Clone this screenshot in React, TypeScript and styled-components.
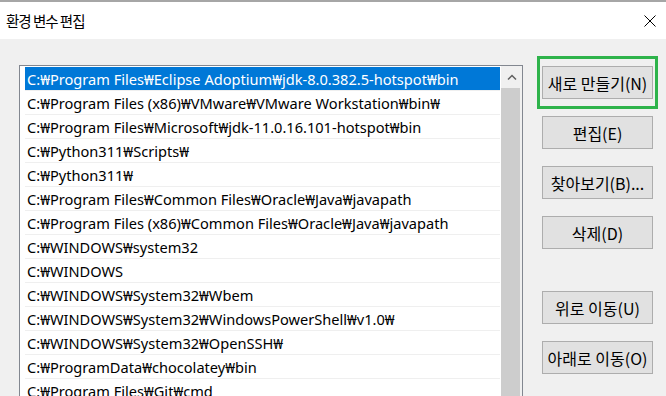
import React from "react";
import styled, { createGlobalStyle } from "styled-components";

const Global = createGlobalStyle`
  html, body { margin: 0; padding: 0; background: #f0f0f0; }
  body { font-family: "Noto Sans CJK KR", "Noto Sans", sans-serif; }
`;

const Window = styled.div`
  width: 666px;
  height: 396px;
  overflow: hidden;
  background: #f0f0f0;
  display: flex;
  flex-direction: column;
`;

const TitleBar = styled.div`
  flex-shrink: 0;
  height: 37px;
  border-top: 2px solid #a6a6a6;
  background: #ffffff;
  display: flex;
  align-items: center;
  justify-content: space-between;
  padding: 0 10px 0 6px;
`;

const Title = styled.span`
  font-size: 14.5px;
  letter-spacing: -1px;
  color: #000;
`;

const CloseIcon = styled.svg`
  display: block;
  width: 12px;
  height: 12px;
`;

const Body = styled.div`
  display: flex;
  align-items: flex-start;
  gap: 19px;
  padding: 26px 0 0 19px;
`;

const ListBox = styled.div`
  flex-shrink: 0;
  width: 504px;
  height: 420px;
  box-sizing: border-box;
  border: 1px solid #828790;
  background: #ffffff;
  display: flex;
`;

const Rows = styled.div`
  flex: 1;
  padding: 1px 0 0 5px;
  display: flex;
  flex-direction: column;
  min-width: 0;
`;

const Row = styled.div<{ $selected?: boolean }>`
  flex-shrink: 0;
  height: 23px;
  border-bottom: 1px solid #efefef;
  padding-left: 2px;
  display: flex;
  align-items: center;
  font-family: "Noto Sans", "Noto Sans CJK KR", sans-serif;
  font-size: 14.6px;
  white-space: nowrap;
  color: ${(p) => (p.$selected ? "#ffffff" : "#000000")};
  background: ${(p) => (p.$selected ? "#0078d7" : "transparent")};
`;

const ScrollBar = styled.div`
  flex-shrink: 0;
  width: 21px;
  margin-left: 1px;
  background: #f0f0f0;
  display: flex;
  flex-direction: column;
`;

const ArrowButton = styled.div`
  height: 22px;
  display: flex;
  align-items: center;
  justify-content: center;
`;

const Thumb = styled.div`
  flex: 1;
  margin-right: 2px;
  background: #cdcdcd;
`;

const Buttons = styled.div`
  display: flex;
  flex-direction: column;
  gap: 17px;
  margin-top: 1px;
`;

const Button = styled.div<{ $focused?: boolean; $spaced?: boolean }>`
  position: relative;
  width: 111px;
  height: 33px;
  box-sizing: border-box;
  border: 1px solid #adadad;
  background: #e1e1e1;
  display: flex;
  align-items: center;
  justify-content: center;
  font-size: 16px;
  color: #000;
  white-space: nowrap;
  margin-top: ${(p) => (p.$spaced ? "25px" : "0")};
  &::after {
    content: "";
    display: ${(p) => (p.$focused ? "block" : "none")};
    position: absolute;
    top: -11px;
    left: -6px;
    right: -6px;
    bottom: -11px;
    border: 3px solid #2eb34b;
  }
`;

const paths = [
  "C:₩Program Files₩Eclipse Adoptium₩jdk-8.0.382.5-hotspot₩bin",
  "C:₩Program Files (x86)₩VMware₩VMware Workstation₩bin₩",
  "C:₩Program Files₩Microsoft₩jdk-11.0.16.101-hotspot₩bin",
  "C:₩Python311₩Scripts₩",
  "C:₩Python311₩",
  "C:₩Program Files₩Common Files₩Oracle₩Java₩javapath",
  "C:₩Program Files (x86)₩Common Files₩Oracle₩Java₩javapath",
  "C:₩WINDOWS₩system32",
  "C:₩WINDOWS",
  "C:₩WINDOWS₩System32₩Wbem",
  "C:₩WINDOWS₩System32₩WindowsPowerShell₩v1.0₩",
  "C:₩WINDOWS₩System32₩OpenSSH₩",
  "C:₩ProgramData₩chocolatey₩bin",
  "C:₩Program Files₩Git₩cmd",
];

export default function App() {
  return (
    <>
      <Global />
      <Window>
        <TitleBar>
          <Title>환경 변수 편집</Title>
          <CloseIcon viewBox="0 0 12 12">
            <path d="M0.5 0.5 L11.5 11.5 M11.5 0.5 L0.5 11.5" stroke="#000" strokeWidth="1" fill="none" />
          </CloseIcon>
        </TitleBar>
        <Body>
          <ListBox>
            <Rows>
              {paths.map((p, i) => (
                <Row key={i} $selected={i === 0}>
                  {p}
                </Row>
              ))}
            </Rows>
            <ScrollBar>
              <ArrowButton>
                <svg width="10" height="6" viewBox="0 0 10 6">
                  <polyline points="1,5.5 5,1.5 9,5.5" fill="none" stroke="#606060" strokeWidth="1.5" />
                </svg>
              </ArrowButton>
              <Thumb />
            </ScrollBar>
          </ListBox>
          <Buttons>
            <Button $focused>새로 만들기(N)</Button>
            <Button>편집(E)</Button>
            <Button>찾아보기(B)...</Button>
            <Button>삭제(D)</Button>
            <Button $spaced>위로 이동(U)</Button>
            <Button>아래로 이동(O)</Button>
          </Buttons>
        </Body>
      </Window>
    </>
  );
}
